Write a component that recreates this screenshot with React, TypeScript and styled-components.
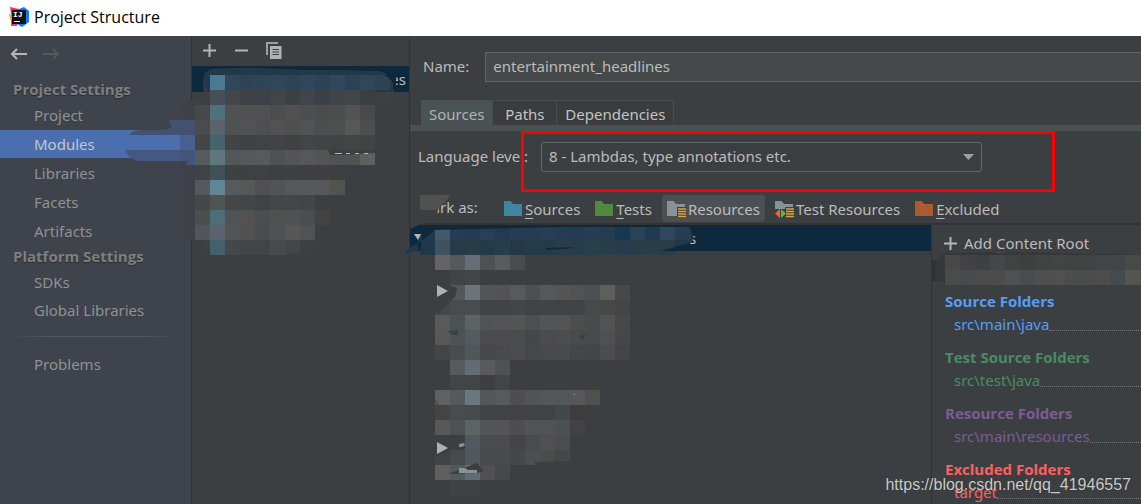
import React from "react";
import styled, { createGlobalStyle } from "styled-components";

const GlobalStyle = createGlobalStyle`
  *, *::before, *::after { box-sizing: border-box; }
  body {
    margin: 0;
    background: #3c3f41;
    color: #bbbbbb;
    font-family: "Noto Sans", "Open Sans", sans-serif;
    font-size: 15px;
    line-height: 20px;
    overflow: hidden;
  }
  button, input, select { font: inherit; color: inherit; }
`;

const Window = styled.div`
  position: relative;
  display: flex;
  flex-direction: column;
  height: 100vh;
  overflow: hidden;
`;

const TitleBar = styled.header`
  display: flex;
  align-items: center;
  gap: 4px;
  flex: none;
  height: 36px;
  padding: 0 9px 2px;
  background: #ffffff;
  color: #000000;
`;

const Title = styled.h1`
  margin: 0;
  font-family: "Open Sans", sans-serif;
  font-size: 16px;
  font-weight: 400;
`;

const Body = styled.div`
  display: flex;
  flex: 1;
  min-height: 0;
`;

const Sidebar = styled.nav`
  flex: none;
  width: 192px;
  border-right: 1px solid #2f3133;
  background: #3f434c;
`;

const History = styled.div`
  display: flex;
  gap: 16px;
  padding: 9px 10px 0;
  height: 42px;
`;

const IconButton = styled.button`
  display: flex;
  align-items: center;
  justify-content: center;
  width: 17px;
  height: 17px;
  padding: 0;
  border: 0;
  background: none;
`;

const SectionTitle = styled.h2`
  margin: 0;
  padding-left: 13px;
  height: 23px;
  line-height: 22px;
  font-family: "Open Sans", sans-serif;
  font-size: 15px;
  font-weight: 700;
  color: #7d7f80;
  text-shadow: 0 1px 1px #2b2d31;
`;

const NavList = styled.ul<{ $gap: number }>`
  display: flex;
  flex-direction: column;
  gap: ${(p) => p.$gap}px;
  margin: 0;
  padding: 0;
  list-style: none;
`;

const NavLink = styled.a<{ $active?: boolean }>`
  display: block;
  height: 28px;
  padding-left: 34px;
  line-height: 28px;
  text-decoration: none;
  color: ${(p) => (p.$active ? "#c3c7ce" : "#8f9192")};
  background: ${(p) => (p.$active ? "#4b6eaf" : "none")};
`;

const NavRule = styled.hr`
  height: 1px;
  margin: 12px 12px 13px;
  border: 0;
  background: linear-gradient(90deg, transparent, #53565c 20%, #53565c 80%, transparent);
`;

const ModulePanel = styled.section`
  flex: none;
  width: 218px;
  border-right: 1px solid #323232;
`;

const Toolbar = styled.div`
  display: flex;
  align-items: center;
  gap: 15px;
  height: 30px;
  padding: 0 9px 1px;
`;

const ModuleRow = styled.div`
  height: 26px;
  padding-right: 3px;
  background: #0d293e;
  line-height: 26px;
  text-align: right;
`;

const Editor = styled.main`
  display: flex;
  flex-direction: column;
  flex: 1;
  min-width: 0;
`;

const NameRow = styled.div`
  display: flex;
  align-items: center;
  gap: 16px;
  padding: 16px 0 0 13px;
  label { padding-bottom: 2px; }
`;

const NameInput = styled.input`
  flex: 1;
  min-width: 0;
  height: 30px;
  padding: 0 7px 2px;
  border: 1px solid #646464;
  border-right: 0;
  border-radius: 0;
  background: #45494a;
  outline: none;
`;

const Tabs = styled.div`
  display: flex;
  margin-top: 18px;
  padding-left: 11px;
  border-bottom: 6px solid #4b5052;
`;

const Tab = styled.button<{ $active?: boolean }>`
  min-width: 64px;
  height: 25px;
  padding: 2px 8px 0;
  border: 1px solid #4a4c4d;
  border-width: 1px 1px 0 0;
  background: ${(p) => (p.$active ? "#4b5254" : "#3a3c3e")};
  color: ${(p) => (p.$active ? "#b0b4b5" : "#c4c4c4")};
  line-height: 20px;
`;

const LevelRow = styled.div`
  display: flex;
  align-items: center;
  gap: 13px;
  padding: 11px 8px 0;
  label { padding-bottom: 2px; }
`;

const SelectWrap = styled.div`
  display: grid;
  align-items: center;
  width: 441px;
  svg, select { grid-area: 1 / 1; }
  svg { justify-self: end; margin-right: 8px; pointer-events: none; }
`;

const Select = styled.select`
  appearance: none;
  height: 30px;
  padding: 0 28px 2px 7px;
  border: 1px solid #646668;
  border-radius: 3px;
  background: #3c3f41;
  outline: none;
`;

const MarkRow = styled.div`
  display: flex;
  align-items: center;
  gap: 5px;
  height: 53px;
  padding: 23px 8px 1px;
  border-bottom: 2px solid #323232;
`;

const MarkLabel = styled.span`
  width: 76px;
  padding-bottom: 4px;
`;

const MarkButton = styled.button<{ $active?: boolean }>`
  display: flex;
  align-items: center;
  gap: 2px;
  height: 27px;
  padding: 0 5px;
  border: 0;
  border-radius: 4px;
  white-space: nowrap;
  background: ${(p) => (p.$active ? "#4c5052" : "none")};
`;

const Mnemonic = styled.span`
  text-decoration: underline;
  text-decoration-thickness: 1px;
  text-underline-offset: 3px;
`;

const Content = styled.div`
  display: flex;
  flex: 1;
  min-height: 0;
`;

const FolderTree = styled.div`
  flex: 1;
  min-width: 0;
`;

const RootRow = styled.div`
  height: 26px;
  padding-left: 279px;
  background: #0d293e;
  line-height: 26px;
`;

const Roots = styled.aside`
  flex: none;
  width: 210px;
  border-left: 1px solid #313335;
  padding-top: 5px;
`;

const AddRoot = styled.button`
  display: flex;
  align-items: center;
  gap: 7px;
  height: 26px;
  margin-bottom: 34px;
  padding: 0 12px;
  border: 0;
  background: none;
  white-space: nowrap;
`;

const RootGroup = styled.section<{ $color: string }>`
  height: 56px;
  padding-left: 13px;
  color: ${(p) => p.$color};
`;

const RootTitle = styled.h3`
  margin: 0;
  font-family: "Open Sans", sans-serif;
  font-size: 15px;
  line-height: 23px;
  font-weight: 700;
`;

const RootPath = styled.div`
  display: flex;
  padding-left: 9px;
  line-height: 22px;
  &::after {
    content: "";
    flex: 1;
    height: 18px;
    border-bottom: 1px dotted #77797a;
  }
`;

const Overlay = styled.svg`
  position: absolute;
  left: 0;
  top: 0;
  pointer-events: none;
`;

const Highlight = styled.div`
  position: absolute;
  left: 521px;
  top: 131px;
  width: 534px;
  height: 61px;
  border: 3px solid #fe0000;
  pointer-events: none;
`;

const Watermark = styled.div`
  position: absolute;
  right: 10px;
  bottom: 9px;
  font-family: "Liberation Sans", Arial, sans-serif;
  font-size: 16px;
  color: #c9cacb;
  text-shadow: 0 0 1px #2a2a2a;
`;

const Logo = () => (
  <svg width="21" height="20" viewBox="0 0 21 20" aria-hidden="true">
    <path d="M1 0L10 2V12L3 13Z" fill="#f0315f" />
    <path d="M0 7L6 10L8 18L2 15Z" fill="#f88a3a" />
    <path d="M2 13L10 11L8 19L2 19Z" fill="#ee3f7b" />
    <path d="M10 2L15 0L20 4V15L13 20L8 17Z" fill="#087cfa" />
    <rect x="3" y="3" width="14" height="14" fill="#111" />
    <text x="4" y="10" fontSize="8" fontWeight="700" fontFamily="Liberation Mono, monospace" fill="#fff">IJ</text>
    <path d="M5 14.500H11" stroke="#fff" strokeWidth="1" />
  </svg>
);

const Arrow = ({ back }: { back?: boolean }) => (
  <svg width="17" height="14" viewBox="0 0 17 14" fill="none" stroke={back ? "#b4b6b8" : "#55585c"} strokeWidth="2">
    {back ? <path d="M17 7H2M7 2L2 7L7 12" /> : <path d="M0 7H15M10 2L15 7L10 12" />}
  </svg>
);

const Plus = () => (
  <svg width="13" height="13" viewBox="0 0 13 13" stroke="#b4b6b7" strokeWidth="2">
    <path d="M0 6.500H13M6.500 0V13" />
  </svg>
);

const Minus = () => (
  <svg width="13" height="13" viewBox="0 0 13 13" stroke="#b4b6b7" strokeWidth="2">
    <path d="M0 6.500H13" />
  </svg>
);

const Copy = () => (
  <svg width="16" height="17" viewBox="0 0 16 17">
    <path d="M0 0H12V2H2V13H0Z" fill="#9c9fa1" />
    <path d="M4 4H15.500V17H4Z" fill="#afb1b3" />
    <path d="M6.500 7.500H13M6.500 10H13M6.500 12.500H13" stroke="#3c3f41" />
  </svg>
);

type FolderKind = "plain" | "resource" | "test";

const Folder = ({ color, kind = "plain" }: { color: string; kind?: FolderKind }) => (
  <svg width="19" height="18" viewBox="0 0 19 18">
    <path d="M0 1H6.500L9 4H18V16H0Z" fill={color} />
    {kind !== "plain" && (
      <>
        <path d="M10 7H19V18H10Z" fill="#3c3f41" />
        <path d="M11 9H19M11 11.500H19M11 14H19M11 16.500H19" stroke="#dca23c" strokeWidth="1.500" />
      </>
    )}
    {kind === "test" && (
      <>
        <path d="M0 9H11V18H0Z" fill="#3c3f41" />
        <path d="M5 9V18L0 13.500Z" fill="#f26522" />
        <path d="M6 9V18L11 13.500Z" fill="#62b543" />
      </>
    )}
  </svg>
);

const NavGroup = ({ items, gap }: { items: string[]; gap: number }) => (
  <NavList $gap={gap}>
    {items.map((item) => (
      <li key={item}>
        <NavLink href="#" $active={item === "Modules"}>{item}</NavLink>
      </li>
    ))}
  </NavList>
);

const rootGroups = [
  { title: "Source Folders", path: "src\\main\\java", color: "#589df6" },
  { title: "Test Source Folders", path: "src\\test\\java", color: "#498c63" },
  { title: "Resource Folders", path: "src\\main\\resources", color: "#7c5c95" },
  { title: "Excluded Folders", path: "target", color: "#ff5f5f" },
];

/* Each mosaic row: left edge, top edge, then one colour per 15px cell. */
type MosaicRow = [number, number, string];

const mosaic: MosaicRow[] = [
  [210, 75, "4a7a92 2f4759 2f4354 2c4557 30475b 2e4454 2f475c 2a4453 30485d 2c4254 30475b 2d4252"],
  [210, 90, "474f57 44474a 3e4146 3d4248 414548 3c4144 3f4549 3d4147 3e4548 41464b 3a4042"],
  [195, 105, "474849 4d727d 505152 525151 505151 4c4e4d 515151 4c4f4f 4b4c4b 4b4d4e 535352 484949"],
  [195, 120, "494c4f 5a626b 4e5251 505354 4d5050 535252 4d504f 505352 4b4f50 4e5050 545858 4f4e4f"],
  [195, 135, "434546 43636d 414344 3f4243 404345 424344 404242 434445 414445 404344 434545 414444"],
  [195, 150, "575a5c 61777e 535759 565857 585a5a 4f5050 525557 565758 545455 505150 4f5351 60615e"],
  [195, 165, "404344 415159 3d4142 3e4041 3f4242 3d4041 3e4142 3d4041 3e4142 3d4041"],
  [195, 180, "55595c 608594 555a5c 575959 505052 515456 565758 56585a 575759 51534f"],
  [195, 195, "444748 4f5453 454849 424647 3f4345 434748 444748 424445"],
  [195, 210, "4b4f50 4d6d79 4f5355 535253 4b4e4e 4f5151 505152 4b4e4f 444344"],
  [195, 225, "525659 5b626d 535657 515152 484c4d 4f5254 575655 505354"],
  [210, 240, "43616c 434849 414546 424446 484b4c 434748"],
  [435, 225, "425a6a 263e53 243a4e 283f54 243b4f 263d53 253d52 273e53 263c50 233b51 263e54 253d50 173850 294258 203b50 304660 263e52"],
  [435, 240, "40525f 233b4b 263c49 233a4a 263d4b 233949 263b49 243b4b 273d4a 273d4c 283f4c 283e4b 263c4c 293d49 2a3e49 293d48"],
  [435, 255, "656464 54595c 656e78 4d5153 575c5e 4b4b4b"],
  [450, 270, "414445 434546"],
  [450, 285, "535759 69747b 515658 545354 565a5b 4c5052 53585a 545555 525252 4c5051 5e5f5b 484848"],
  [435, 300, "454646 484c4e 484c50 3f4345 404445 424646 3e4344 404445 404343 414445 474a4b 474949 444546"],
  [435, 315, "595959 4a5351 5a6465 505456 555454 525655 4b5052 525658 545455 4d4d4e 474b4d 535354 484849"],
  [435, 330, "585858 4c5351 535b60 4a4b4c 4c4c4e 4a4c4c 44484a 4a4c4c 4b4d4e 494b4b 464a4b 505052 464848"],
  [435, 345, "444546 494c4d 50565a 464949 484b4c 4b4c4d 474949 464a4b 484b4c 454647 424647 4c4c4d 444545"],
  [450, 360, "555a5d 636c76 5b5a5b 4e5254"],
  [450, 375, "424546 424546 3b3f40 424546"],
  [435, 390, "626162 54595c 697780 535759 565a5a 4e4e4f 505457 575656 53575a 575658 50514d"],
  [435, 405, "444445 484c4d 474b4d 414445 404344 3f4344 404344 3f4345 43484b 3d3d3e"],
  [435, 420, "595859 4b5251 5b6566 505558 555455 4e4d4f 505457 525254 4c5053 424143"],
  [465, 435, "52595e 494c4e 494c4d 454446 494b4d 505052 4a4e51"],
  [435, 450, "434344 474a4b 51575b 484b4c 484b4b 44484b 4b4f51 4c4c4d 484748"],
  [435, 465, "605f5f 535a5e 636b75 504f52 464949"],
  [450, 480, "3e4243 3e4244"],
  [945, 255, "484848 414243 3e4041 454648 414342 3c403e 404342 434444 404342 404343 424446 414547 484a46 464946"],
  [945, 270, "4c4b4c 484b4e 4b4b4c 4c4c4a 4c5154 484c4e 504e4e 50504d 4b4c4c 4a4c4e 4d4e4c 454a4e 54564e 4c4d4d"],
];

const Redactions = () => (
  <Overlay width="1141" height="504" viewBox="0 0 1141 504" aria-hidden="true">
    <path d="M212 69L250 68L300 70L378 71Q394 74 394 92L393 103H375V150L330 152L345 195H315L315 250L288 255H205L199 240H186Q180 235 180 220V108L206 97Q200 80 207 72Z" fill="#3c4042" />
    <path d="M212 69L250 68L300 70L378 71Q392 74 393 92H208Q199 79 207 71Z" fill="#22394a" />
    <path d="M180 105L195 99V240H186L180 234Z" fill="#3e4248" />
    <path d="M129 135Q132 131 140 130H163L172 128Q169 124 169 120H180V135Z" fill="#435173" />
    <path d="M125 150H180V161H138Q128 159 125 150Z" fill="#445880" />
    <path d="M180 120H195V135H180Z" fill="#445070" />
    <path d="M180 135H195V150H180Z" fill="#466092" />
    <path d="M180 150H195V165H185L188 161H180Z" fill="#44557c" />
    <path d="M420 195H450Q440 201 436 216Q422 224 410 229V195Z" fill="#3c3f41" />
    <path d="M422 233Q415 242 419 250L406 254V251L411 247L421 241L435 230L560 227L688 228Q697 235 691 243L660 250L620 255H420Z" fill="#20384b" />
    <path d="M932 260H945V281H932Z" fill="#303334" />
    <path d="M945 253L1010 252L1140 255V285H950Q935 283 935 269Q935 257 945 253Z" fill="#353839" />
    {mosaic.map(([x, y, cells]) =>
      cells.split(" ").map((fill, i) => (
        <rect key={`${x}-${y}-${i}`} x={x + i * 15} y={y} width="15" height="15" fill={`#${fill}`} />
      )),
    )}
    <path d="M435 225H700V229L687 227L560 227L435 230Z" fill="#0d293e" />
    <path d="M384 75H396V88L393 90Q394 79 384 75Z" fill="#0d293e" />
    <path d="M661 251L690 243V251Z" fill="#0d293e" />
    <path d="M546 248L576 247L565 249L546 250Z" fill="#0d293e" />
    <path d="M420 195H450L445 203L436 210H420Z" fill="#505252" />
    <path d="M328 150H375V153L345 155H330Z" fill="#3c3f41" />
    <path d="M335 153.500H342M346 153.500H350M355 153.500H359M364 153.500H368" stroke="#b4b6b7" />
    <path d="M285 255L315 249V255Z" fill="#3c3f41" />
    <path d="M414 234H421L418 240Z" fill="#b4b6b7" />
    <path d="M435 285H448L457 288L455 297L439 312L435 313Z" fill="#3c3f41" />
    <path d="M435 435H450L456 442L465 444L435 457Z" fill="#3c3f41" />
    <path d="M437 285V297L448 291ZM437 442V454L448 448Z" fill="#afb1b3" />
    <path d="M448 331L458 330V335H452ZM578 336L587 334L583 340Z" fill="#3e4142" />
    <path d="M535 462L570 461V465H535Z" fill="#3c3f41" />
    <path d="M448 474L477 463L484 471L477 473Z" fill="#3c3f41" />
    <path d="M459 468H465L468 470H477V473H459ZM459 444L464 443L465 445L462 447H459Z" fill="#87939a" />
    <path d="M574 394.500H575" stroke="#8fb5dd" />
    <path d="M435 400L439 407" stroke="#3c3f41" />
  </Overlay>
);

export default function App() {
  return (
    <>
      <GlobalStyle />
      <Window>
        <TitleBar>
          <Logo />
          <Title>Project Structure</Title>
        </TitleBar>
        <Body>
          <Sidebar>
            <History>
              <IconButton aria-label="Back"><Arrow back /></IconButton>
              <IconButton aria-label="Forward" disabled><Arrow /></IconButton>
            </History>
            <SectionTitle>Project Settings</SectionTitle>
            <NavGroup gap={1} items={["Project", "Modules", "Libraries", "Facets", "Artifacts"]} />
            <SectionTitle>Platform Settings</SectionTitle>
            <NavGroup gap={0} items={["SDKs", "Global Libraries"]} />
            <NavRule />
            <NavGroup gap={0} items={["Problems"]} />
          </Sidebar>
          <ModulePanel>
            <Toolbar>
              <IconButton aria-label="Add"><Plus /></IconButton>
              <IconButton aria-label="Remove"><Minus /></IconButton>
              <IconButton aria-label="Copy"><Copy /></IconButton>
            </Toolbar>
            <ModuleRow>es</ModuleRow>
          </ModulePanel>
          <Editor>
            <NameRow>
              <label htmlFor="module-name">Name:</label>
              <NameInput id="module-name" defaultValue="entertainment_headlines" />
            </NameRow>
            <Tabs role="tablist">
              <Tab role="tab" aria-selected $active>Sources</Tab>
              <Tab role="tab" aria-selected={false}>Paths</Tab>
              <Tab role="tab" aria-selected={false}>Dependencies</Tab>
            </Tabs>
            <LevelRow>
              <label htmlFor="language-level">Language level:</label>
              <SelectWrap>
                <Select id="language-level">
                  <option>8 - Lambdas, type annotations etc.</option>
                </Select>
                <svg width="11" height="6" viewBox="0 0 11 6"><path d="M0 0H11L5.500 6Z" fill="#9fa2a4" /></svg>
              </SelectWrap>
            </LevelRow>
            <MarkRow>
              <MarkLabel>Mark as:</MarkLabel>
              <MarkButton><Folder color="#3e86a0" /><span><Mnemonic>S</Mnemonic>ources</span></MarkButton>
              <MarkButton><Folder color="#4f8a3f" /><span><Mnemonic>T</Mnemonic>ests</span></MarkButton>
              <MarkButton $active><Folder color="#87939a" kind="resource" /><span>Resources</span></MarkButton>
              <MarkButton><Folder color="#87939a" kind="test" /><span>Test Resources</span></MarkButton>
              <MarkButton><Folder color="#ad5a30" /><span><Mnemonic>E</Mnemonic>xcluded</span></MarkButton>
            </MarkRow>
            <Content>
              <FolderTree>
                <RootRow>s</RootRow>
              </FolderTree>
              <Roots>
                <AddRoot><Plus /><span>Add <Mnemonic>C</Mnemonic>ontent Root</span></AddRoot>
                {rootGroups.map((group) => (
                  <RootGroup key={group.title} $color={group.color}>
                    <RootTitle>{group.title}</RootTitle>
                    <RootPath>{group.path}</RootPath>
                  </RootGroup>
                ))}
              </Roots>
            </Content>
          </Editor>
        </Body>
        <Redactions />
        <Highlight />
        <Watermark>https://blog.csdn.net/qq_41946557</Watermark>
      </Window>
    </>
  );
}
